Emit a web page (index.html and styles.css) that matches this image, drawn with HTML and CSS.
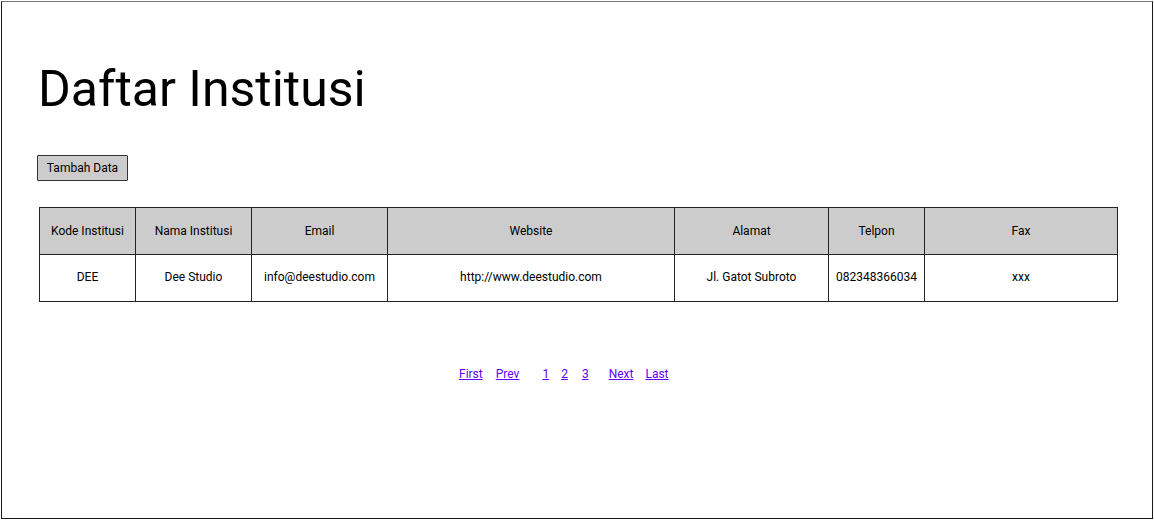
FILE: index.html
```html
<!DOCTYPE html>
<html>
<head>
<meta charset="utf-8">
<link rel="stylesheet" href="styles.css">
</head>
<body>
<div class="frame">
  <h1 class="title">Daftar Institusi</h1>
  <button class="btn">Tambah Data</button>
  <table class="grid">
    <colgroup>
      <col style="width:96px"><col style="width:116px"><col style="width:136px"><col style="width:287px"><col style="width:154px"><col style="width:96px"><col style="width:193px">
    </colgroup>
    <thead>
      <tr><th>Kode Institusi</th><th>Nama Institusi</th><th>Email</th><th>Website</th><th>Alamat</th><th>Telpon</th><th>Fax</th></tr>
    </thead>
    <tbody>
      <tr><td>DEE</td><td>Dee Studio</td><td>info@deestudio.com</td><td>http://www.deestudio.com</td><td>Jl. Gatot Subroto</td><td>082348366034</td><td>xxx</td></tr>
    </tbody>
  </table>
  <nav class="pager">
    <a href="#" class="pg first">First</a>
    <a href="#" class="pg prev">Prev</a>
    <a href="#" class="pg num1">1</a>
    <a href="#" class="pg num2">2</a>
    <a href="#" class="pg num3">3</a>
    <a href="#" class="pg next">Next</a>
    <a href="#" class="pg last">Last</a>
  </nav>
</div>
</body>
</html>
```

FILE: styles.css
```css
* { box-sizing: border-box; }
html, body { margin: 0; padding: 0; background: #fff; }
body { font-family: Roboto, "Liberation Sans", sans-serif; color: #000; }
.frame {
  margin: 1px;
  width: 1152px;
  height: 518px;
  border: 1px solid #1a1a1a;
  border-top-color: #777;
  padding: 0 0 0 35px;
  display: flex;
  flex-direction: column;
  align-items: flex-start;
}
.title {
  margin: 58px 0 0 1px;
  font-size: 50px;
  font-weight: 400;
  line-height: 58px;
}
.btn {
  margin-top: 37px;
  height: 26px;
  width: 91px;
  padding: 0;
  font-family: Roboto, "Liberation Sans", sans-serif;
  font-size: 12px;
  color: #000;
  background: #cccccc;
  border: 1px solid #333;
  border-radius: 1px;
}
.grid {
  margin: 26px 0 0 2px;
  border-collapse: collapse;
  table-layout: fixed;
  width: 1078px;
  font-size: 12px;
}
.grid th, .grid td {
  border: 1px solid #222;
  height: 47px;
  padding: 0;
  text-align: center;
  font-weight: 400;
  white-space: nowrap;
}
.grid td { padding-bottom: 2px; }
.grid th { background: #cccccc; }
.pager {
  margin: 65px 0 0 422px;
  display: flex;
  font-size: 12px;
  line-height: 14px;
}
.pg { color: #6200ff; text-decoration: underline; }
.prev { margin-left: 13px; }
.num1 { margin-left: 23px; }
.num2 { margin-left: 12px; }
.num3 { margin-left: 14px; }
.next { margin-left: 20px; }
.last { margin-left: 12px; }
```
